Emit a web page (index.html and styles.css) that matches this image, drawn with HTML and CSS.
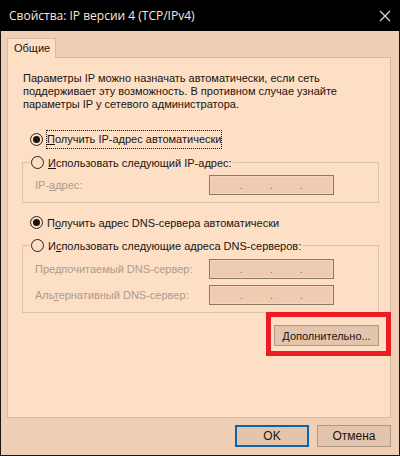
FILE: index.html
```html
<!DOCTYPE html>
<html lang="ru">
<head>
<meta charset="utf-8">
<title>Свойства: IP версии 4 (TCP/IPv4)</title>
<link rel="stylesheet" href="styles.css">
</head>
<body>
<div class="window">
  <div class="titlebar">
    <span class="title">Свойства: IP версии 4 (TCP/IPv4)</span>
    <svg class="close" width="12" height="12" viewBox="0 0 12 12"><path d="M1 1 L11 11 M11 1 L1 11" stroke="#f6dcc8" stroke-width="1.1" fill="none"/></svg>
  </div>
  <div class="body">
    <div class="tabstrip"><div class="tab">Общие</div></div>
    <div class="tabpage">
      <p class="intro">Параметры IP можно назначать автоматически, если сеть поддерживает эту возможность. В противном случае узнайте параметры IP у сетевого администратора.</p>

      <label class="row first"><span class="radio checked"></span><span class="focus"><u>П</u>олучить IP-адрес автоматически</span></label>
      <fieldset class="group g1">
        <legend><label class="row"><span class="radio"></span><span><u>И</u>спользовать следующий IP-адрес:</span></label></legend>
        <div class="field"><span class="flabel">IP-<u>а</u>дрес:</span><span class="ipbox"><i>.</i><i>.</i><i>.</i></span></div>
      </fieldset>

      <label class="row dns"><span class="radio checked"></span><span>П<u>о</u>лучить адрес DNS-сервера автоматически</span></label>
      <fieldset class="group g2">
        <legend><label class="row"><span class="radio"></span><span>И<u>с</u>пользовать следующие адреса DNS-серверов:</span></label></legend>
        <div class="field"><span class="flabel">Пре<u>д</u>почитаемый DNS-сервер:</span><span class="ipbox"><i>.</i><i>.</i><i>.</i></span></div>
        <div class="field second"><span class="flabel">Аль<u>т</u>ернативный DNS-сервер:</span><span class="ipbox"><i>.</i><i>.</i><i>.</i></span></div>
      </fieldset>

      <div class="advrow">
        <div class="advwrap">
          <button class="btn adv" type="button"><u>Д</u>ополнительно...</button>
          <span class="highlight"></span>
        </div>
      </div>
    </div>
    <div class="buttons">
      <button class="btn ok" type="button">OK</button>
      <button class="btn" type="button">Отмена</button>
    </div>
  </div>
</div>
</body>
</html>
```
FILE: styles.css
```css
html, body {
  margin: 0;
  padding: 0;
  background: #000;
}
.window {
  width: 400px;
  height: 456px;
  box-sizing: border-box;
  background: #efcfb5;
  border: 1px solid #1c1410;
  border-top: none;
  display: flex;
  flex-direction: column;
  font-family: "Liberation Sans", Arial, sans-serif;
  font-size: 11px;
  color: #1a1410;
}
.titlebar {
  height: 31px;
  flex: none;
  background: #000;
  display: flex;
  align-items: center;
  padding-left: 9px;
  padding-right: 9px;
  margin: 0 -1px;
}
.title {
  color: #fbe8da;
  font-family: "Open Sans", "Liberation Sans", sans-serif;
  font-size: 12px;
  flex: 1;
}
.close {
  display: block;
}
.body {
  flex: 1;
  display: flex;
  flex-direction: column;
  padding: 7px 8px 0 6px;
}
.tabstrip {
  display: flex;
  height: 19px;
}
.tab {
  width: 49px;
  height: 20px;
  box-sizing: border-box;
  border: 1px solid #d6bba4;
  border-bottom: none;
  background: #fddfc5;
  padding: 3px 0 0 6px;
  position: relative;
  z-index: 1;
}
.tabpage {
  height: 361px;
  box-sizing: border-box;
  border: 1px solid #d6bba4;
  background: #fddfc5;
  padding: 14px 11px 0 14px;
}
.intro {
  margin: 0;
  line-height: 13px;
  padding-left: 1px;
  padding-right: 10px;
}
.row {
  display: flex;
  align-items: center;
  height: 17px;
  gap: 4px;
}
.row.first {
  margin: 20px 0 0 8px;
}
.row.dns {
  margin: 11px 0 0 8px;
}
.radio {
  width: 13px;
  height: 13px;
  box-sizing: border-box;
  border: 1px solid #2a2018;
  border-radius: 50%;
  display: flex;
  align-items: center;
  justify-content: center;
  flex: none;
}
.radio.checked::after {
  content: "";
  width: 7px;
  height: 7px;
  border-radius: 50%;
  background: #1a1410;
}
.focus {
  outline: 1px dotted #1a1410;
  outline-offset: 0;
  padding: 1px 0;
  line-height: 15px;
}
.group {
  margin: 6px 0 0 0;
  border: 1px solid #dcc2ab;
  padding: 4px 0 7px 12px;
  min-width: 0;
}
.group legend {
  padding: 0 1px;
  margin-left: -5px;
}
.group.g2 {
  padding-top: 5px;
}
.field {
  display: grid;
  grid-template-columns: 174px 125px;
  align-items: center;
  height: 20px;
}
.field.second {
  margin-top: 6px;
}
.flabel {
  color: #ac9c8c;
}
.ipbox {
  height: 20px;
  box-sizing: border-box;
  border: 1px solid #8c7866;
  box-shadow: inset 0 0 0 1px #f4d4bb;
  background: #efccb1;
  display: flex;
  padding-left: 30px;
  align-items: flex-end;
  padding-bottom: 3px;
}
.ipbox i {
  font-style: normal;
  width: 30px;
  color: #7a6a5c;
  font-size: 10px;
  line-height: 10px;
}
.advrow {
  display: flex;
  justify-content: flex-end;
  margin-top: 12px;
}
.advwrap {
  position: relative;
}
.highlight {
  position: absolute;
  left: -8px;
  right: -12px;
  top: -13px;
  bottom: -10px;
  border: 5px solid #ec1c24;
  pointer-events: none;
}
.btn {
  font-family: "Liberation Sans", Arial, sans-serif;
  font-size: 11px;
  color: #1a1410;
  background: #e3c5ad;
  border: 1px solid #ad9886;
  height: 21px;
  padding: 0;
  margin: 0;
  box-sizing: border-box;
}
.adv {
  width: 105px;
}
.buttons {
  display: flex;
  justify-content: flex-end;
  gap: 8px;
  margin-top: 7px;
  padding-right: 0;
}
.buttons .btn {
  width: 74px;
  height: 22px;
  font-size: 12px;
}
.buttons .btn.ok {
  border: 2px solid #0a64ac;
}
```
